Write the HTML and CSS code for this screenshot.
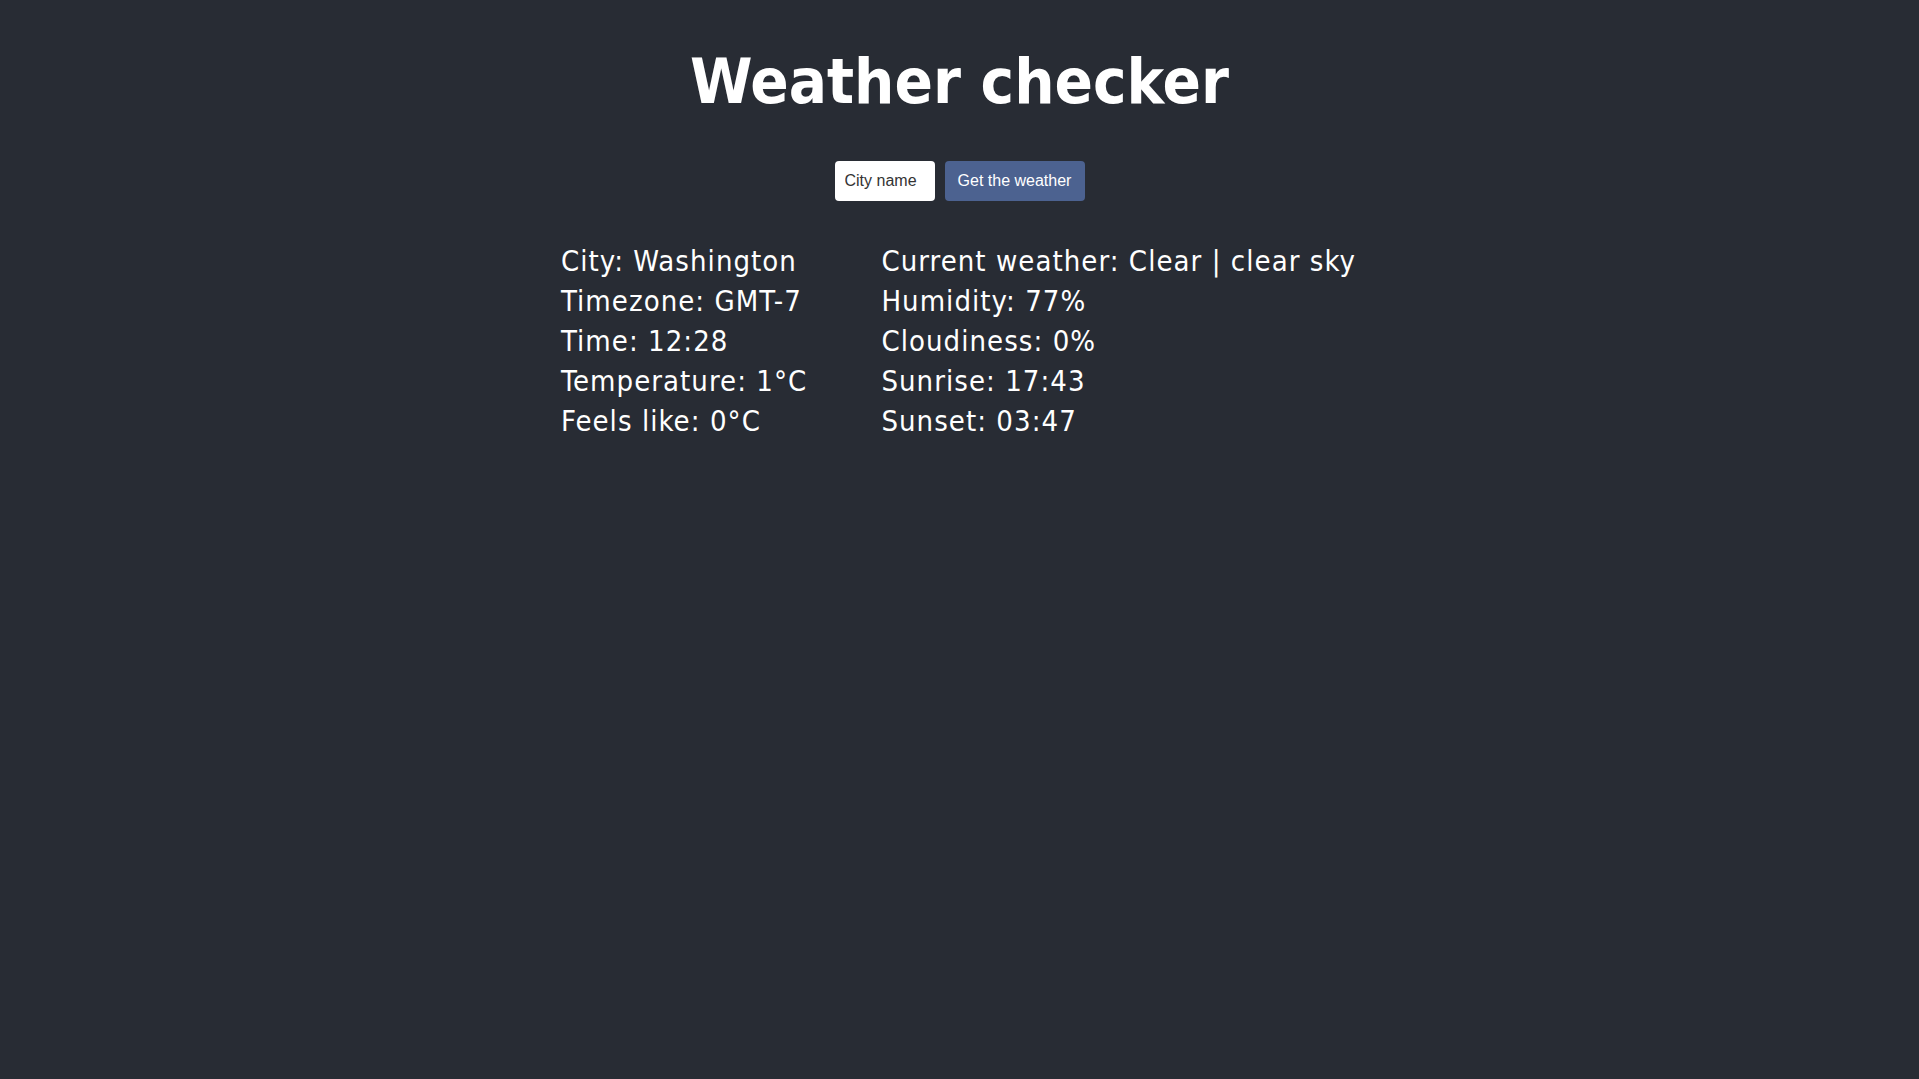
FILE: index.html
```html
<!DOCTYPE html>
<html lang="en">
<head>
<meta charset="utf-8">
<title>Weather checker</title>
<link rel="stylesheet" href="styles.css">
</head>
<body>
<div class="app">
  <h1 class="title">Weather checker</h1>
  <form class="search">
    <input class="city-input" type="text" placeholder="City name">
    <button class="get-btn" type="button">Get the weather</button>
  </form>
  <div class="info">
    <div class="col">
      <p>City: Washington</p>
      <p>Timezone: GMT-7</p>
      <p>Time: 12:28</p>
      <p>Temperature: 1°C</p>
      <p>Feels like: 0°C</p>
    </div>
    <div class="col">
      <p>Current weather: Clear | clear sky</p>
      <p>Humidity: 77%</p>
      <p>Cloudiness: 0%</p>
      <p>Sunrise: 17:43</p>
      <p>Sunset: 03:47</p>
    </div>
  </div>
</div>
</body>
</html>
```

FILE: styles.css
```css
html, body {
  margin: 0;
  padding: 0;
  background: #282c34;
  min-height: 100%;
}
body {
  font-family: "DejaVu Sans", Tahoma, sans-serif;
  font-stretch: condensed;
  color: #ffffff;
}
.app {
  display: flex;
  flex-direction: column;
  align-items: center;
}
.title {
  margin: 44px 0 0;
  font-size: 63px;
  line-height: 76px;
  font-weight: bold;
}
.search {
  display: flex;
  gap: 10px;
  margin-top: 41px;
}
.city-input {
  box-sizing: border-box;
  width: 100px;
  height: 40px;
  padding: 0 10px;
  border: none;
  border-radius: 4px;
  background: #ffffff;
  font-family: "Liberation Sans", Arial, sans-serif;
  font-size: 16px;
  color: #222;
  outline: none;
}
.city-input::placeholder {
  color: #333;
  opacity: 1;
}
.get-btn {
  box-sizing: border-box;
  width: 140px;
  height: 40px;
  border: none;
  border-radius: 4px;
  background: #4c6290;
  color: #ffffff;
  font-family: "Liberation Sans", Arial, sans-serif;
  font-size: 16px;
  padding: 0;
}
.info {
  display: flex;
  gap: 74px;
  margin-top: 40px;
  margin-right: 2px;
  font-size: 29px;
  letter-spacing: 1.05px;
  line-height: 40px;
}
.info p {
  margin: 0;
  white-space: nowrap;
}
```
